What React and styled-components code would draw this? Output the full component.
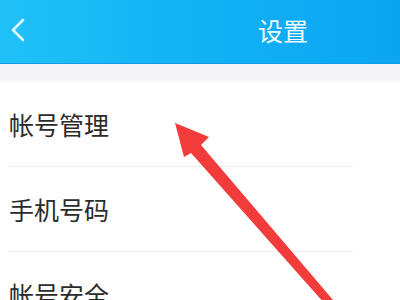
import React from 'react'
import styled, { createGlobalStyle } from 'styled-components'

const Global = createGlobalStyle`
  html, body { margin: 0; padding: 0; background: #fff; }
  body { font-family: "Noto Sans CJK SC", "Noto Sans", sans-serif; }
`

const items = ['帐号管理', '手机号码', '帐号安全']

function App() {
  return (
    <Page>
      <Global />
      <Header>
        <Back>
          <svg width="18" height="26" viewBox="0 0 18 26">
            <path d="M14 3 L4 13 L14 23" fill="none" stroke="#e4f6ff" strokeWidth="2.6" strokeLinecap="round" strokeLinejoin="round" />
          </svg>
        </Back>
        <Title>设置</Title>
      </Header>
      <Band />
      <List>
        {items.map((t, i) => (
          <Row key={i} last={i === items.length - 1}>
            <Label>{t}</Label>
          </Row>
        ))}
      </List>
      <Arrow width="400" height="300" viewBox="0 0 400 300">
        <polygon
          points="175,123 209,137 201,145 339,307 333,313 191,153 184,157"
          fill="#f23b3b"
        />
      </Arrow>
    </Page>
  )
}

export default App

const Page = styled.div`
  position: relative;
  width: 400px;
  height: 300px;
  overflow: hidden;
  background: #fff;
`

const Header = styled.div`
  height: 63px;
  display: flex;
  align-items: center;
  background: linear-gradient(90deg, #20c1f7 0%, #12b2f4 50%, #0ba4f2 100%);
  border-bottom: 1px solid #0d9ee8;
`

const Back = styled.div`
  width: 18px;
  height: 26px;
  margin-left: 9px;
  margin-top: -4px;
`

const Title = styled.div`
  margin-left: 231px;
  margin-top: -3px;
  font-size: 25px;
  color: #f2fbff;
`

const Band = styled.div`
  height: 18px;
  background: linear-gradient(180deg, #f3f2f7, #f6f6f9);
`

const List = styled.div`
  display: flex;
  flex-direction: column;
`

const Row = styled.div`
  height: 85px;
  margin-left: 8px;
  width: 345px;
  display: flex;
  align-items: center;
  padding-bottom: 1px;
  box-sizing: border-box;
  border-bottom: ${p => (p.last ? 'none' : '1px solid #ececec')};
`

const Label = styled.div`
  padding-left: 1px;
  font-size: 25px;
  color: #2b2b2b;
`

const Arrow = styled.svg`
  position: absolute;
  left: 0;
  top: 0;
  pointer-events: none;
`
